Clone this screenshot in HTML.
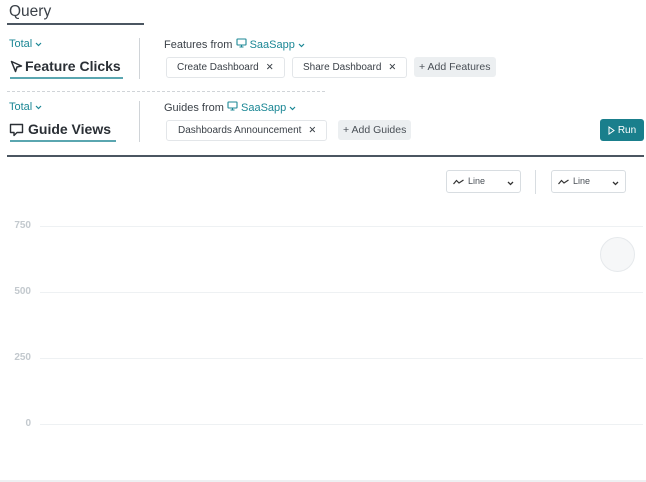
<!DOCTYPE html>
<html><head><style>
*{margin:0;padding:0;box-sizing:border-box}
body{width:646px;height:482px;background:#fff;font-family:"Liberation Sans",sans-serif;position:relative;overflow:hidden;color:#2a2f35}
.a{position:absolute;white-space:nowrap}
.teal{color:#1b8795}
.chip{position:absolute;height:21px;border:1px solid #e3e6e9;border-radius:3px;font-size:10px;line-height:19px;padding:0 10px;color:#3b4148;background:#fff}
.x{font-size:9.5px;margin-left:7px}
.add{position:absolute;height:20px;background:#eceff1;border-radius:3px;font-size:10.5px;line-height:20px;padding:0 5px;color:#4a5057}
.sel{position:absolute;width:75px;height:23px;border:1px solid #d8dde1;border-radius:3px;font-size:9px;line-height:21px;color:#4a5057}
.grid{position:absolute;left:40px;width:603px;height:1px;background:#eef1f3}
.lbl{position:absolute;left:0;width:31px;text-align:right;font-size:10px;color:#c3c9ce;font-weight:bold}
svg{display:inline-block}
</style></head><body>
<div class="a" style="left:9px;top:3px;font-size:15.5px;color:#3b4148">Query</div>
<div class="a" style="left:7px;top:23px;width:137px;height:2px;background:#4b5661"></div>

<div class="a teal" style="left:9px;top:38px;font-size:11px">Total <svg width="7" height="5" viewBox="0 0 7 5"><path d="M1 1L3.5 3.5L6 1" fill="none" stroke="#1b8795" stroke-width="1.2"/></svg></div>
<svg class="a" style="left:10px;top:60px" width="13" height="13" viewBox="0 0 13 13"><path d="M1.5 1.5 L11.5 6 L7 7 L5.5 11.5 Z" fill="none" stroke="#2a2f35" stroke-width="1.5" stroke-linejoin="round"/></svg>
<div class="a" style="left:25px;top:58px;font-size:14px;font-weight:bold">Feature Clicks</div>
<div class="a" style="left:10px;top:77px;width:113px;height:2px;background:#5aa6b0"></div>
<div class="a" style="left:139px;top:38px;width:1px;height:41px;background:#d0d4d8"></div>
<div class="a" style="left:164px;top:38px;font-size:11px;color:#3b4148">Features from <svg width="11" height="10" viewBox="0 0 11 10"><rect x="1" y="1" width="9" height="6" rx="0.5" fill="none" stroke="#1b8795" stroke-width="1.1"/><path d="M3.5 9H7.5M5.5 7V9" stroke="#1b8795" stroke-width="1.1"/></svg><span class="teal"> SaaSapp <svg width="7" height="5" viewBox="0 0 7 5"><path d="M1 1L3.5 3.5L6 1" fill="none" stroke="#1b8795" stroke-width="1.2"/></svg></span></div>
<div class="chip" style="left:166px;top:57px">Create Dashboard<span class="x">✕</span></div>
<div class="chip" style="left:292px;top:57px">Share Dashboard<span class="x">✕</span></div>
<div class="add" style="left:414px;top:57px">+ Add Features</div>

<div class="a" style="left:7px;top:91px;width:318px;border-top:1px dashed #d0d4d8"></div>

<div class="a teal" style="left:9px;top:101px;font-size:11px">Total <svg width="7" height="5" viewBox="0 0 7 5"><path d="M1 1L3.5 3.5L6 1" fill="none" stroke="#1b8795" stroke-width="1.2"/></svg></div>
<svg class="a" style="left:9px;top:123px" width="15" height="14" viewBox="0 0 15 14"><path d="M1.5 1.5 H13.5 V9.5 H8 L5 12.5 V9.5 H1.5 Z" fill="none" stroke="#2a2f35" stroke-width="1.4" stroke-linejoin="round"/></svg>
<div class="a" style="left:28px;top:121px;font-size:14px;font-weight:bold">Guide Views</div>
<div class="a" style="left:10px;top:140px;width:106px;height:2px;background:#5aa6b0"></div>
<div class="a" style="left:139px;top:101px;width:1px;height:41px;background:#d0d4d8"></div>
<div class="a" style="left:164px;top:101px;font-size:11px;color:#3b4148">Guides from <svg width="11" height="10" viewBox="0 0 11 10"><rect x="1" y="1" width="9" height="6" rx="0.5" fill="none" stroke="#1b8795" stroke-width="1.1"/><path d="M3.5 9H7.5M5.5 7V9" stroke="#1b8795" stroke-width="1.1"/></svg><span class="teal"> SaaSapp <svg width="7" height="5" viewBox="0 0 7 5"><path d="M1 1L3.5 3.5L6 1" fill="none" stroke="#1b8795" stroke-width="1.2"/></svg></span></div>
<div class="chip" style="left:166px;top:120px;padding:0 10px 0 11px">Dashboards Announcement<span class="x">✕</span></div>
<div class="add" style="left:338px;top:120px">+ Add Guides</div>
<div class="a" style="left:600px;top:119px;width:44px;height:22px;background:#1a7f8c;border-radius:3px;color:#fff;font-size:10px;display:flex;align-items:center;justify-content:center;gap:3px"><svg width="7" height="9" viewBox="0 0 7 9"><path d="M1 1L6 4.5L1 8Z" fill="none" stroke="#fff" stroke-width="1"/></svg><span>Run</span></div>

<div class="a" style="left:7px;top:155px;width:637px;height:2px;background:#4b5661"></div>

<div class="sel" style="left:446px;top:170px"><svg style="position:absolute;left:6px;top:8px" width="11" height="6" viewBox="0 0 11 6"><path d="M0.5 5L3.5 1.5L6 4L10.5 1" fill="none" stroke="#333" stroke-width="1.2"/></svg><span style="position:absolute;left:21px">Line</span><svg style="position:absolute;right:6px;top:10px" width="7" height="5" viewBox="0 0 7 5"><path d="M1 1L3.5 3.5L6 1" fill="none" stroke="#333" stroke-width="1.3"/></svg></div>
<div class="a" style="left:535px;top:170px;width:1px;height:24px;background:#d8dde1"></div>
<div class="sel" style="left:551px;top:170px"><svg style="position:absolute;left:6px;top:8px" width="11" height="6" viewBox="0 0 11 6"><path d="M0.5 5L3.5 1.5L6 4L10.5 1" fill="none" stroke="#333" stroke-width="1.2"/></svg><span style="position:absolute;left:21px">Line</span><svg style="position:absolute;right:6px;top:10px" width="7" height="5" viewBox="0 0 7 5"><path d="M1 1L3.5 3.5L6 1" fill="none" stroke="#333" stroke-width="1.3"/></svg></div>

<div class="lbl" style="top:220px">750</div><div class="grid" style="top:226px"></div>
<div class="lbl" style="top:286px">500</div><div class="grid" style="top:292px"></div>
<div class="lbl" style="top:352px">250</div><div class="grid" style="top:358px"></div>
<div class="lbl" style="top:418px">0</div><div class="grid" style="top:424px"></div>
<div class="a" style="left:600px;top:237px;width:35px;height:35px;border-radius:50%;background:#f6f7f8;border:1.5px solid #e6e9ec"></div>
<div class="a" style="left:0;top:480px;width:646px;height:2px;background:#eef0f2"></div>
</body></html>
